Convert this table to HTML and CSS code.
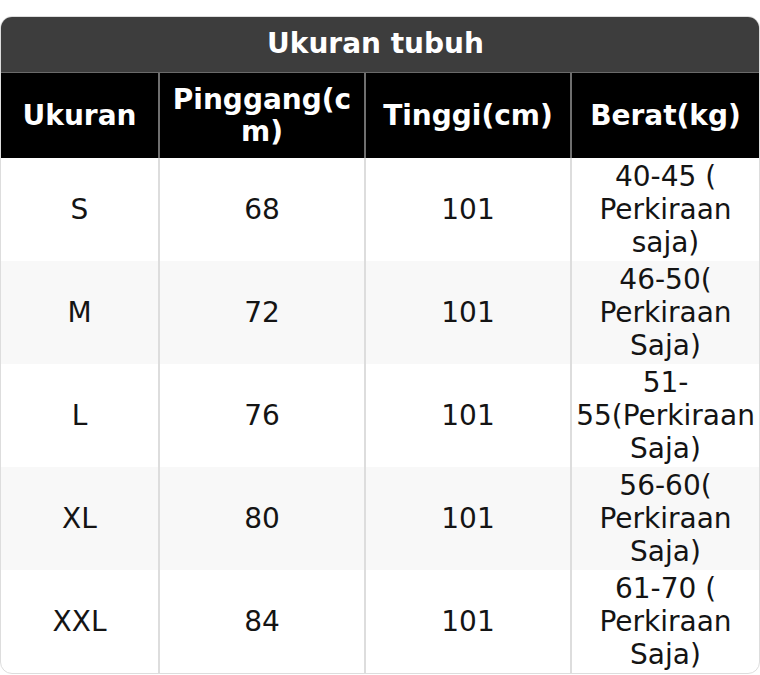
FILE: index.html
```html
<!DOCTYPE html>
<html lang="id">
<head>
<meta charset="utf-8">
<title>Ukuran tubuh</title>
<link rel="stylesheet" href="styles.css">
</head>
<body>
<div class="size-card">
  <div class="size-title">Ukuran tubuh</div>
  <table class="size-table">
    <thead>
      <tr>
        <th class="c1">Ukuran</th>
        <th class="c2">Pinggang(cm)</th>
        <th class="c3">Tinggi(cm)</th>
        <th class="c4">Berat(kg)</th>
      </tr>
    </thead>
    <tbody>
      <tr><td>S</td><td>68</td><td>101</td><td>40-45 ( Perkiraan saja)</td></tr>
      <tr><td>M</td><td>72</td><td>101</td><td>46-50( Perkiraan Saja)</td></tr>
      <tr><td>L</td><td>76</td><td>101</td><td>51-55(Perkiraan Saja)</td></tr>
      <tr><td>XL</td><td>80</td><td>101</td><td>56-60( Perkiraan Saja)</td></tr>
      <tr><td>XXL</td><td>84</td><td>101</td><td>61-70 ( Perkiraan Saja)</td></tr>
    </tbody>
  </table>
</div>
</body>
</html>
```
FILE: styles.css
```css
* { box-sizing: border-box; }
html, body { margin: 0; padding: 0; background: #fff; }
body {
  padding-top: 16px;
  font-family: "DejaVu Sans", "Liberation Sans", sans-serif;
}
.size-card {
  width: 760px;
  border: 1px solid #dddddd;
  border-radius: 12px;
  overflow: hidden;
}
.size-title {
  background: #3d3d3d;
  color: #ffffff;
  font-weight: bold;
  font-size: 28px;
  height: 56px;
  line-height: 53px;
  padding-right: 9px;
  text-align: center;
  border-bottom: 1px solid #6a6a6a;
}
.size-table {
  width: 758px;
  border-collapse: separate;
  border-spacing: 0;
  table-layout: fixed;
}
.size-table .c1 { width: 157px; }
.size-table .c2 { width: 206px; }
.size-table .c3 { width: 206px; }
.size-table .c4 { width: 189px; }
.size-table th {
  background: #000000;
  color: #ffffff;
  font-weight: bold;
  font-size: 28px;
  line-height: 32px;
  height: 85px;
  padding: 0 3px;
  text-align: center;
  vertical-align: middle;
  overflow-wrap: anywhere;
  border-left: 2px solid #6f6f6f;
}
.size-table td {
  color: #141414;
  font-size: 28px;
  line-height: 33px;
  height: 103px;
  padding: 2px 3px;
  text-align: center;
  vertical-align: middle;
  border-left: 2px solid #dddddd;
}
.size-table th:first-child,
.size-table td:first-child { border-left: none; }
.size-table tbody tr:nth-child(even) td { background: #f8f8f8; }
```
